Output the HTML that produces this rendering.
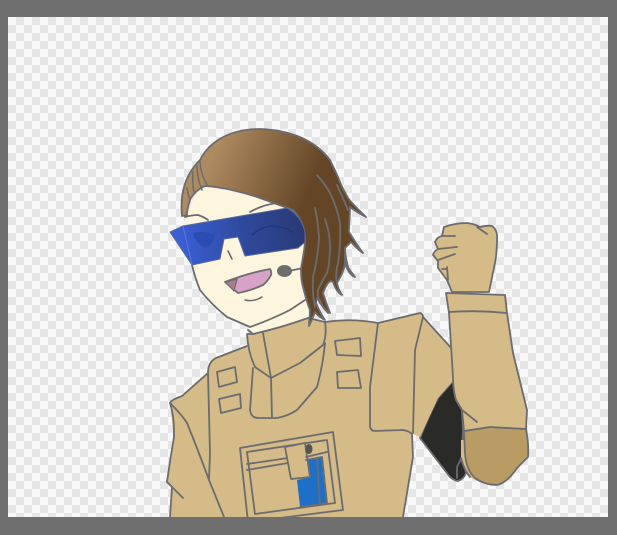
<!DOCTYPE html>
<html>
<head>
<meta charset="utf-8">
<style>
html,body{margin:0;padding:0;background:#6f6f6f;width:617px;height:535px;overflow:hidden}
svg{display:block}
</style>
</head>
<body>
<svg width="617" height="535" viewBox="0 0 617 535" xmlns="http://www.w3.org/2000/svg">
<defs>
<pattern id="chk" x="8" y="17" width="16" height="16" patternUnits="userSpaceOnUse">
<rect width="16" height="16" fill="#f8f8f8"/>
<rect x="8" width="8" height="8" fill="#e6e6e6"/>
<rect y="8" width="8" height="8" fill="#e6e6e6"/>
</pattern>
<linearGradient id="hair" gradientUnits="userSpaceOnUse" x1="215" y1="150" x2="310" y2="190">
<stop offset="0" stop-color="#ae8a60"/>
<stop offset="1" stop-color="#644627"/>
</linearGradient>
<linearGradient id="gl" gradientUnits="userSpaceOnUse" x1="175" y1="250" x2="300" y2="225">
<stop offset="0" stop-color="#3c60da"/>
<stop offset="0.55" stop-color="#2f4a9c"/>
<stop offset="1" stop-color="#2a3a78"/>
</linearGradient>
</defs>
<rect width="617" height="535" fill="#6f6f6f"/>
<rect x="8" y="17" width="600" height="500" fill="url(#chk)"/>

<g fill="none" stroke="#6c6c70" stroke-width="1.8" stroke-linejoin="round" stroke-linecap="round">
<!-- black inner sleeve -->
<path fill="#2a2a28" d="M453,381 L438,398 Q428,418 420,438 L450,477 Q455,481 458,481 Q464,479 466,473 L462,457 L463,430 L462,410 L456,400 Z"/>
<path d="M463,430 L462,457 L457,467 L457,478"/>
<!-- torso -->
<path fill="#d4bb87" stroke="none" d="M170,517 L172,487 L167,482 L174,437 L170,403 L182,396 L208,373 Q208,362 216,358 L247,346 L253,335 L307,320 L325,322 Q352,318 378,323 L420,313 L423,317 L453,350 L453,381 L438,398 L420,437 L413,434 L413,457 L403,517 Z"/>
<path d="M170,517 L172,487 L167,482 Q170,460 174,437 C174,420 173,412 170,403 Q171,400 182,396 L208,373 Q208,362 216,358 L247,346"/>
<path d="M167,482 L183,498"/>
<path d="M170,403 Q182,415 187,423 Q198,450 209,480 L224,517"/>
<path d="M208,373 Q209,410 210,453 L209,480"/>
<path d="M325,322 Q352,318 378,323 L420,313 Q423,314 423,317 L453,350"/>
<path d="M378,323 L370,387 L370,427 Q371,431 375,431 L403,430 Q409,431 412,434 L413,457 L403,517"/>
<path d="M423,317 L415,350 L413,433"/>
<!-- collar -->
<path fill="#d4bb87" d="M253,334 L247,334 Q248,352 255,367 L271,378 L300,363 L323,345 Q327,335 325,322 L308,318 Z"/>
<path d="M263,333 L271,378 L272,418"/>
<path d="M253,368 L250,410 Q251,418 258,418 L277,418 Q288,416 297,410 L317,387 Q323,365 325,343"/>
<!-- shoulder rects -->
<path d="M217,372 L235,367 L237,382 L219,387 Z"/>
<path d="M219,399 L240,394 L241,408 L221,413 Z"/>
<path d="M335,341 L360,338 L361,356 L337,355 Z"/>
<path d="M337,372 L358,370 L361,388 L338,388 Z"/>
<!-- pocket -->
<path fill="#1e6fc8" stroke="none" d="M297,480 L310,477 L307,460 L322,457 L327,503 L300,507 Z"/>
<path d="M240,448 L333,432 L343,510 L248,522 Z"/>
<path d="M247,452 L327,440 L335,503 L255,514 Z"/>
<path d="M247,464 L288,458 M247,470 L288,463"/>
<path fill="#d4bb87" d="M285,447 L305,443 L310,477 L291,479 Z"/>
<path d="M306,457 L327,452 M306,460 L322,457 M317,458 L320,505 M322,457 L327,503 M300,507 L327,503"/>
<ellipse cx="309" cy="449" rx="3.5" ry="5" fill="#555" stroke="none"/>
<!-- hand -->
<path fill="#d4bb87" d="M452,292 L447,280 L438,268 L438,261 L433,255 Q434,251 438,249 L435,242 Q437,237 442,236 L444,227 Q455,223 467,223 Q475,224 480,227 Q488,225 492,226 Q498,230 497,240 Q497,252 495,263 L489,292 Z"/>
<path d="M442,236 L455,236 M438,249 L457,247 M438,260 L455,254 M442,269 L447,269 M447,267 L448,280 M477,227 L487,234"/>
<!-- cuff dark -->
<path fill="#d4bb87" stroke="none" d="M461,440 L461,458 Q464,470 470,477 Q478,483 490,484 L500,470 L490,440 Z"/>
<path d="M461,458 Q464,470 470,477"/>
<path fill="#b89c64" d="M464,431 L490,427 L526,429 Q529,445 528,457 Q522,463 517,468 Q507,483 497,485 Q485,485 475,478 Q466,470 465,453 Z"/>
<!-- arm -->
<path fill="#d4bb87" d="M446,293 L505,295 L507,313 L513,353 L527,410 L526,429 L490,427 L464,431 L462,410 L456,400 Q453,390 453,377 L449,313 Z"/>
<path d="M449,312 Q478,310 507,313"/>
<path d="M462,410 L477,422"/>
<!-- face -->
<path fill="#fdf5dd" stroke="none" d="M184,222 L192,265 Q195,278 200,290 L227,317 L250,328 L253,334 Q280,328 308,318 L308,290 L303,277 L305,233 L293,210 L260,198 L205,186 L195,195 L187,215 Z"/>
<path d="M192,265 Q195,278 200,290 Q212,305 227,317 L250,327 Q270,320 290,310 L305,300"/>
<path d="M248,330 L253,334 Q280,328 308,318"/>
<path d="M250,212 Q262,205 277,203"/>
<path d="M185,217 Q192,215 198,215 Q204,217 208,220"/>
<path d="M228,251 L232,259" stroke-width="1.6"/>
<!-- mouth -->
<path fill="#d8a2c8" d="M225,282 Q248,273 270,269 Q272,272 271,275 Q268,281 263,285 Q250,291 238,293 Z"/>
<path fill="#a6808f" stroke-width="1.2" d="M225,282 L237,279 L234,291 Z"/>
<path d="M245,300 Q254,302 262,297" stroke-width="1.5"/>
<!-- mic -->
<path d="M289,271 L303,268" />
<ellipse cx="284.5" cy="271" rx="7" ry="5.5" fill="#6e6e6e" stroke="#6e6e6e" stroke-width="1"/>
<!-- hair -->
<path fill="url(#hair)" d="M182,216 C180,195 184,176 200,160 C210,140 232,129 260,129 C290,130 315,140 330,160 C334,168 338,177 338,177 C341,186 345,192 348,198 C354,206 361,212 366,217 C360,214 354,210 350,207 C350,215 349,224 349,232 C354,240 359,248 363,253 C358,250 354,245 351,242 C349,244 347,246 345,248 C345,256 347,262 348,267 C350,271 353,274 355,277 C351,276 348,272 345,263 C344,272 340,277 337,283 C338,288 340,292 342,295 C338,293 335,288 333,282 C331,280 329,282 328,283 C326,286 324,290 323,293 C325,300 328,307 330,313 C326,311 323,308 322,305 C321,302 319,299 318,297 C317,299 316,301 316,303 C319,310 322,316 325,320 C321,318 317,315 315,312 C313,317 311,322 309,326 C309,320 310,315 310,310 C307,303 305,295 303,287 C301,280 301,275 301,270 C302,260 305,250 305,240 C305,225 298,215 293,210 L260,198 C243,192 222,187 205,186 C198,189 192,195 190,200 C188,206 187,211 187,215 Z"/>
<path d="M200,162 Q201,175 207,185 M197,166 Q197,178 202,190 M193,172 Q192,182 194,192 M187,188 Q188,195 190,200" stroke-width="1.5"/>
<path d="M317,175 Q325,184 330,193 Q337,207 340,223 Q341,245 338,263 Q335,275 337,283"/>
<path d="M337,185 Q343,198 348,210"/>
<path d="M315,208 Q318,222 319,237 Q318,258 313,277 Q312,293 315,307"/>
<path d="M325,219 Q330,233 330,247 Q330,262 327,273 Q321,283 318,290 Q317,298 320,303 L328,313"/>
<path d="M345,248 L345,263"/>
<!-- glasses -->
<path fill="url(#gl)" stroke="#5a6a9a" stroke-width="1" d="M170,232 L183,226 L287,208 Q293,211 298,217 Q304,225 305,233 L305,242 L298,248 L245,256 L238,237 L224,239 L220,259 L192,265 Z"/>
<path d="M183,226 L192,265" stroke="#5878e0" stroke-width="1"/>
<path fill="#2a48ae" fill-opacity=".75" stroke="none" d="M192,233 Q203,230 215,235 Q213,245 205,248 Q196,243 192,233 Z"/>
<path d="M252,235 Q262,226 273,226 Q284,226 292,232" stroke="#203580" stroke-width="1.6"/>
</g>

<!-- frame on top -->
<rect x="0" y="517" width="617" height="18" fill="#6f6f6f"/>
</svg>
</body>
</html>
